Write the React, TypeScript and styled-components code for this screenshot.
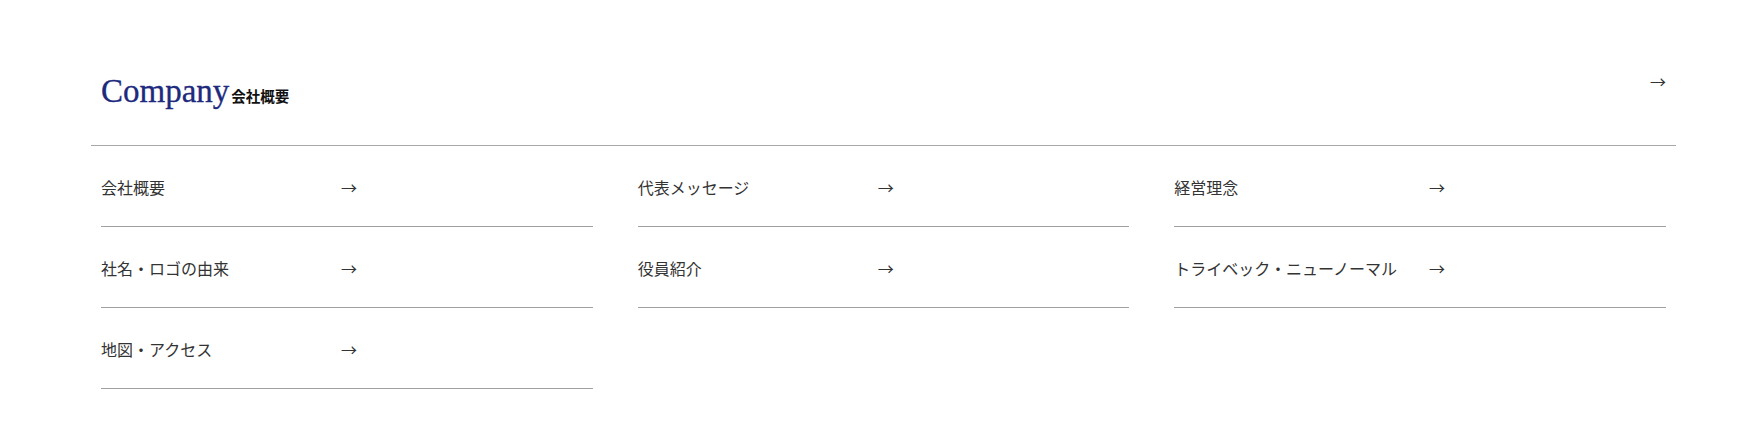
import React from "react";
import styled, { createGlobalStyle } from "styled-components";

const GlobalStyle = createGlobalStyle`
  html, body { margin: 0; padding: 0; background: #fff; }
  body { font-family: "Noto Sans CJK JP", "Noto Sans", sans-serif; color: #333; }
  * { box-sizing: border-box; }
`;

const Section = styled.section`
  padding: 67px 66px 40px 91px;
`;

const Header = styled.header`
  display: flex;
  justify-content: space-between;
  align-items: flex-start;
  height: 79px;
  padding: 0 10px;
  border-bottom: 1px solid #a8a8a8;
`;

const Title = styled.h2`
  margin: 0;
  display: flex;
  align-items: baseline;
  line-height: 48px;
`;

const TitleEn = styled.span`
  font-family: "Liberation Serif", "DejaVu Serif", serif;
  font-weight: 400;
  font-size: 33px;
  color: #1d2a7d;
  -webkit-text-stroke: 0.3px #1d2a7d;
`;

const TitleJa = styled.span`
  font-family: "Noto Sans CJK JP", sans-serif;
  font-weight: 700;
  font-size: 14.5px;
  color: #111;
  margin-left: 2px;
`;

const Arrow = styled.span`
  font-family: "Noto Sans CJK JP", sans-serif;
  font-size: 16px;
  line-height: 24px;
  color: #333;
`;

const HeaderArrow = styled(Arrow)`
  padding-top: 2px;
`;

const Columns = styled.div`
  display: grid;
  grid-template-columns: repeat(3, 1fr);
  column-gap: 45px;
  padding: 0 10px;
`;

const Column = styled.ul`
  margin: 0;
  padding: 0;
  list-style: none;
  display: grid;
  grid-template-columns: minmax(208px, max-content) 1fr;
  column-gap: 32px;
  align-content: start;
`;

const Item = styled.li`
  grid-column: 1 / -1;
  display: grid;
  grid-template-columns: subgrid;
  align-items: center;
  padding: 29px 0 27px;
  border-bottom: 1px solid #a0a0a0;
`;

const Label = styled.span`
  font-size: 16px;
  line-height: 24px;
  color: #333;
  white-space: nowrap;
`;

const columns: string[][] = [
  ["会社概要", "社名・ロゴの由来", "地図・アクセス"],
  ["代表メッセージ", "役員紹介"],
  ["経営理念", "トライベック・ニューノーマル"],
];

export default function App() {
  return (
    <>
      <GlobalStyle />
      <Section>
        <Header>
          <Title>
            <TitleEn>Company</TitleEn>
            <TitleJa>会社概要</TitleJa>
          </Title>
          <HeaderArrow>→</HeaderArrow>
        </Header>
        <Columns>
          {columns.map((col, i) => (
            <Column key={i}>
              {col.map((label) => (
                <Item key={label}>
                  <Label>{label}</Label>
                  <Arrow>→</Arrow>
                </Item>
              ))}
            </Column>
          ))}
        </Columns>
      </Section>
    </>
  );
}
